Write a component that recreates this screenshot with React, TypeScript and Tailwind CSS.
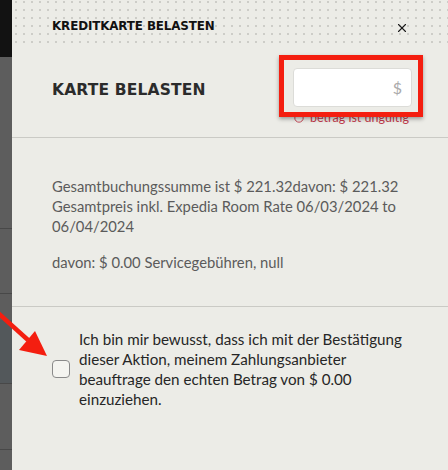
import React from 'react';
import { X } from 'lucide-react';

const sans = { fontFamily: '"Lato", "Noto Sans", sans-serif' };
const heavy = { fontFamily: '"DejaVu Sans", "Inter", sans-serif' };

export default function App() {
  return (
    <div className="relative flex w-[448px] h-[470px] overflow-hidden bg-[#ecece7]">
      {/* page behind the drawer */}
      <div className="flex flex-col w-[12px] h-full bg-[#5d5d5d]">
        <div className="h-[57px] bg-[#121212]" />
        <div className="h-[172px] border-b border-[#484848]" />
        <div className="h-[65px] border-b border-[#484848]" />
        <div className="h-[26px]" />
        <div className="h-[64px] bg-[#53585b] border-b border-[#484848]" />
        <div className="h-[66px] border-b border-[#484848]" />
      </div>

      {/* drawer */}
      <div className="flex flex-col flex-1 bg-[#ecece7]" style={sans}>
        <div className="flex items-center justify-between h-[45px] pl-[40px] pr-[39px] bg-[radial-gradient(circle,#cdcdc8_1px,transparent_1.3px)] bg-[size:8px_8px] bg-[position:0_-2px]">
          <h2 className="text-[11.9px] font-bold tracking-[-0.01em] text-[#111] pt-[9px]" style={heavy}>
            KREDITKARTE BELASTEN
          </h2>
          <button className="text-[#1a1a1a] pt-[10px]">
            <X size={14} strokeWidth={1.9} />
          </button>
        </div>

        <div className="flex items-start justify-between h-[93px] pl-[40px] pr-[36px] border-b border-[#cacac5]">
          <h1 className="mt-[34px] text-[15.5px] font-bold tracking-[0.01em] text-[#2b2b2b]" style={heavy}>
            KARTE BELASTEN
          </h1>
          <div className="flex flex-col w-[119px] mt-[23px]">
            <div className="flex items-center justify-end w-[119px] h-[39px] px-[9px] bg-white border border-[#dcdcd8] rounded-[4px] text-[16px] text-[#aaa]">
              $
            </div>
            <div className="flex items-center gap-[3px] mt-[3px] pl-[1px] text-[12.5px] leading-[16px] text-[#c13b4c] whitespace-nowrap">
              <svg width="10" height="10" viewBox="0 0 10 10" fill="none" stroke="#c13b4c" strokeWidth="0.9">
                <circle cx="5" cy="5" r="4.2" />
                <path d="M5 1.2v2.2" />
              </svg>
              <span className="pl-[3px]">betrag ist ungültig</span>
            </div>
          </div>
        </div>

        <div className="h-[169px] pl-[40px] pt-[38px] text-[14.8px] leading-[20px] text-[#5b5b5b] border-b border-[#cacac5] whitespace-nowrap">
          <p>
            Gesamtbuchungssumme ist $ 221.32davon: $ 221.32
            <br />
            Gesamtpreis inkl. Expedia Room Rate 06/03/2024 to
            <br />
            06/04/2024
          </p>
          <p className="mt-[16px]">davon: $ 0.00 Servicegebühren, null</p>
        </div>

        <div className="flex items-center gap-[9px] pl-[40px] pt-[22px]">
          <div className="shrink-0 w-[18px] h-[18px] rounded-[4px] border border-[#8a8a8a] bg-[#f4f4f0]" />
          <p className="text-[15.2px] leading-[20px] text-[#262626] whitespace-nowrap">
            Ich bin mir bewusst, dass ich mit der Bestätigung
            <br />
            dieser Aktion, meinem Zahlungsanbieter
            <br />
            beauftrage den echten Betrag von $ 0.00
            <br />
            einzuziehen.
          </p>
        </div>
      </div>

      {/* annotation: red box */}
      <div className="absolute left-[279px] top-[55px] w-[144px] h-[62px] border-[5px] border-[#f41e10] shadow-[0_2px_4px_rgba(0,0,0,0.35)]" />

      {/* annotation: red arrow */}
      <svg className="absolute left-0 top-[300px]" width="60" height="70" viewBox="0 0 60 70">
        <path d="M-2 13 L28 40" stroke="#f41e10" strokeWidth="4.5" />
        <polygon points="47,56 19,50 35,31" fill="#f41e10" />
      </svg>
    </div>
  );
}
